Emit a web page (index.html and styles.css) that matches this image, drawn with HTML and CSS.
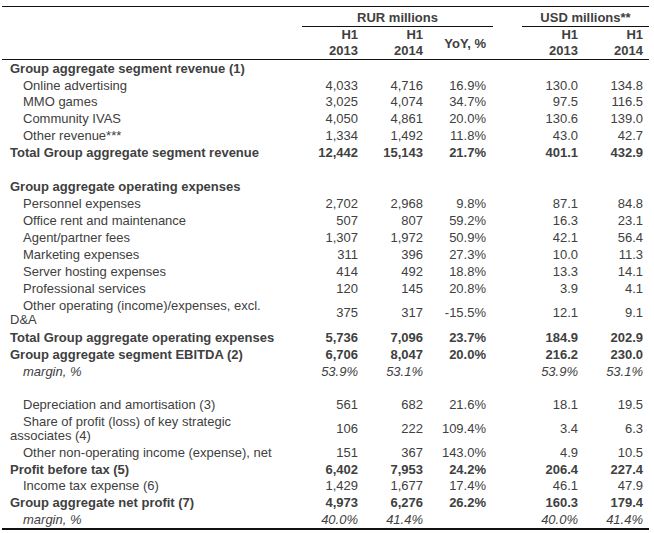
FILE: index.html
```html
<!DOCTYPE html>
<html>
<head>
<meta charset="utf-8">
<link rel="stylesheet" href="styles.css">
</head>
<body>
<div class="wrap">
<table class="fin">
  <colgroup>
    <col class="c-label"><col class="c-a"><col class="c-b"><col class="c-c"><col class="c-gap"><col class="c-d"><col class="c-e">
  </colgroup>
  <thead>
    <tr class="hr1">
      <th></th>
      <th colspan="3" class="grp">RUR millions</th>
      <th></th>
      <th colspan="2" class="grp">USD millions**</th>
    </tr>
    <tr class="hr2">
      <th></th>
      <th class="num">H1<br>2013</th>
      <th class="num">H1<br>2014</th>
      <th class="num yoy">YoY, %</th>
      <th></th>
      <th class="num">H1<br>2013</th>
      <th class="num e">H1<br>2014</th>
    </tr>
  </thead>
  <tbody>
    <tr class="b"><td class="l1">Group aggregate segment revenue (1)</td><td></td><td></td><td></td><td></td><td></td><td></td></tr>
    <tr class="s16"><td class="l2">Online advertising</td><td>4,033</td><td>4,716</td><td class="y">16.9%</td><td></td><td>130.0</td><td class="e">134.8</td></tr>
    <tr><td class="l2">MMO games</td><td>3,025</td><td>4,074</td><td class="y">34.7%</td><td></td><td>97.5</td><td class="e">116.5</td></tr>
    <tr><td class="l2">Community IVAS</td><td>4,050</td><td>4,861</td><td class="y">20.0%</td><td></td><td>130.6</td><td class="e">139.0</td></tr>
    <tr><td class="l2">Other revenue***</td><td>1,334</td><td>1,492</td><td class="y">11.8%</td><td></td><td>43.0</td><td class="e">42.7</td></tr>
    <tr class="b"><td class="l1">Total Group aggregate segment revenue</td><td>12,442</td><td>15,143</td><td class="y">21.7%</td><td></td><td>401.1</td><td class="e">432.9</td></tr>
    <tr class="blank"><td colspan="7"></td></tr>
    <tr class="b"><td class="l1">Group aggregate operating expenses</td><td></td><td></td><td></td><td></td><td></td><td></td></tr>
    <tr><td class="l2">Personnel expenses</td><td>2,702</td><td>2,968</td><td class="y">9.8%</td><td></td><td>87.1</td><td class="e">84.8</td></tr>
    <tr><td class="l2">Office rent and maintenance</td><td>507</td><td>807</td><td class="y">59.2%</td><td></td><td>16.3</td><td class="e">23.1</td></tr>
    <tr><td class="l2">Agent/partner fees</td><td>1,307</td><td>1,972</td><td class="y">50.9%</td><td></td><td>42.1</td><td class="e">56.4</td></tr>
    <tr><td class="l2">Marketing expenses</td><td>311</td><td>396</td><td class="y">27.3%</td><td></td><td>10.0</td><td class="e">11.3</td></tr>
    <tr><td class="l2">Server hosting expenses</td><td>414</td><td>492</td><td class="y">18.8%</td><td></td><td>13.3</td><td class="e">14.1</td></tr>
    <tr><td class="l2">Professional services</td><td>120</td><td>145</td><td class="y">20.8%</td><td></td><td>3.9</td><td class="e">4.1</td></tr>
    <tr class="two"><td class="l2">Other operating (income)/expenses, excl.<br>D&amp;A</td><td>375</td><td>317</td><td class="y">-15.5%</td><td></td><td>12.1</td><td class="e">9.1</td></tr>
    <tr class="b"><td class="l1">Total Group aggregate operating expenses</td><td>5,736</td><td>7,096</td><td class="y">23.7%</td><td></td><td>184.9</td><td class="e">202.9</td></tr>
    <tr class="b"><td class="l1">Group aggregate segment EBITDA (2)</td><td>6,706</td><td>8,047</td><td class="y">20.0%</td><td></td><td>216.2</td><td class="e">230.0</td></tr>
    <tr class="it"><td class="l2">margin, %</td><td>53.9%</td><td>53.1%</td><td class="y"></td><td></td><td>53.9%</td><td class="e">53.1%</td></tr>
    <tr class="blank s16"><td colspan="7"></td></tr>
    <tr><td class="l2">Depreciation and amortisation (3)</td><td>561</td><td>682</td><td class="y">21.6%</td><td></td><td>18.1</td><td class="e">19.5</td></tr>
    <tr class="two t31"><td class="l2">Share of profit (loss) of key strategic<br>associates (4)</td><td>106</td><td>222</td><td class="y">109.4%</td><td></td><td>3.4</td><td class="e">6.3</td></tr>
    <tr><td class="l2">Other non-operating income (expense), net</td><td>151</td><td>367</td><td class="y">143.0%</td><td></td><td>4.9</td><td class="e">10.5</td></tr>
    <tr class="b s16"><td class="l1">Profit before tax (5)</td><td>6,402</td><td>7,953</td><td class="y">24.2%</td><td></td><td>206.4</td><td class="e">227.4</td></tr>
    <tr><td class="l2">Income tax expense (6)</td><td>1,429</td><td>1,677</td><td class="y">17.4%</td><td></td><td>46.1</td><td class="e">47.9</td></tr>
    <tr class="b"><td class="l1">Group aggregate net profit (7)</td><td>4,973</td><td>6,276</td><td class="y">26.2%</td><td></td><td>160.3</td><td class="e">179.4</td></tr>
    <tr class="it last"><td class="l2">margin, %</td><td>40.0%</td><td>41.4%</td><td class="y"></td><td></td><td>40.0%</td><td class="e">41.4%</td></tr>
  </tbody>
</table>
</div>
</body>
</html>
```

FILE: styles.css
```css
html, body {
  margin: 0;
  padding: 0;
  background: #ffffff;
}
.wrap {
  padding: 6px 5px 0 2px;
}
.fin {
  border-collapse: collapse;
  table-layout: fixed;
  width: 647px;
  font-family: "Liberation Sans", Arial, sans-serif;
  font-size: 13px;
  color: #404040;
}
.c-label { width: 300px; }
.c-a { width: 60px; }
.c-b { width: 65px; }
.c-c { width: 66px; }
.c-gap { width: 29px; }
.c-d { width: 60px; }
.c-e { width: 67px; }

.fin th {
  font-weight: bold;
  padding: 0;
}
.hr1 th {
  border-top: 1px solid #111;
  height: 18px;
  line-height: 15px;
  text-align: center;
  vertical-align: middle;
  padding-top: 1px;
}
.hr1 th.grp {
  border-bottom: 1px solid #111;
}
.hr2 th {
  height: 30px;
  line-height: 16px;
  border-bottom: 1px solid #111;
  vertical-align: bottom;
  padding: 0 4px 0 0;
  text-align: right;
}
.hr2 th.yoy {
  vertical-align: middle;
  padding: 2px 7px 0 0;
}
.hr2 th.e {
  padding-right: 6px;
}

.fin td {
  height: 17px;
  padding: 0 4px 0 0;
  line-height: 15px;
  text-align: right;
  white-space: nowrap;
  vertical-align: middle;
}
.fin tr.s16 td { height: 16px; }
.fin td.y { padding-right: 7px; }
.fin td.e { padding-right: 6px; }
.fin td.l1,
.fin td.l2 {
  text-align: left;
  padding-left: 8px;
}
.fin td.l2 {
  text-indent: 13px;
}
.fin tr.b td { font-weight: bold; }
.fin tr.it td { font-style: italic; }
.fin tr.two td {
  height: 32px;
  line-height: 14px;
}
.fin tr.two.t31 td { height: 31px; }
.fin tr.blank td { padding: 0; }
.fin tr.last td {
  border-bottom: 2px solid #111;
}
```
